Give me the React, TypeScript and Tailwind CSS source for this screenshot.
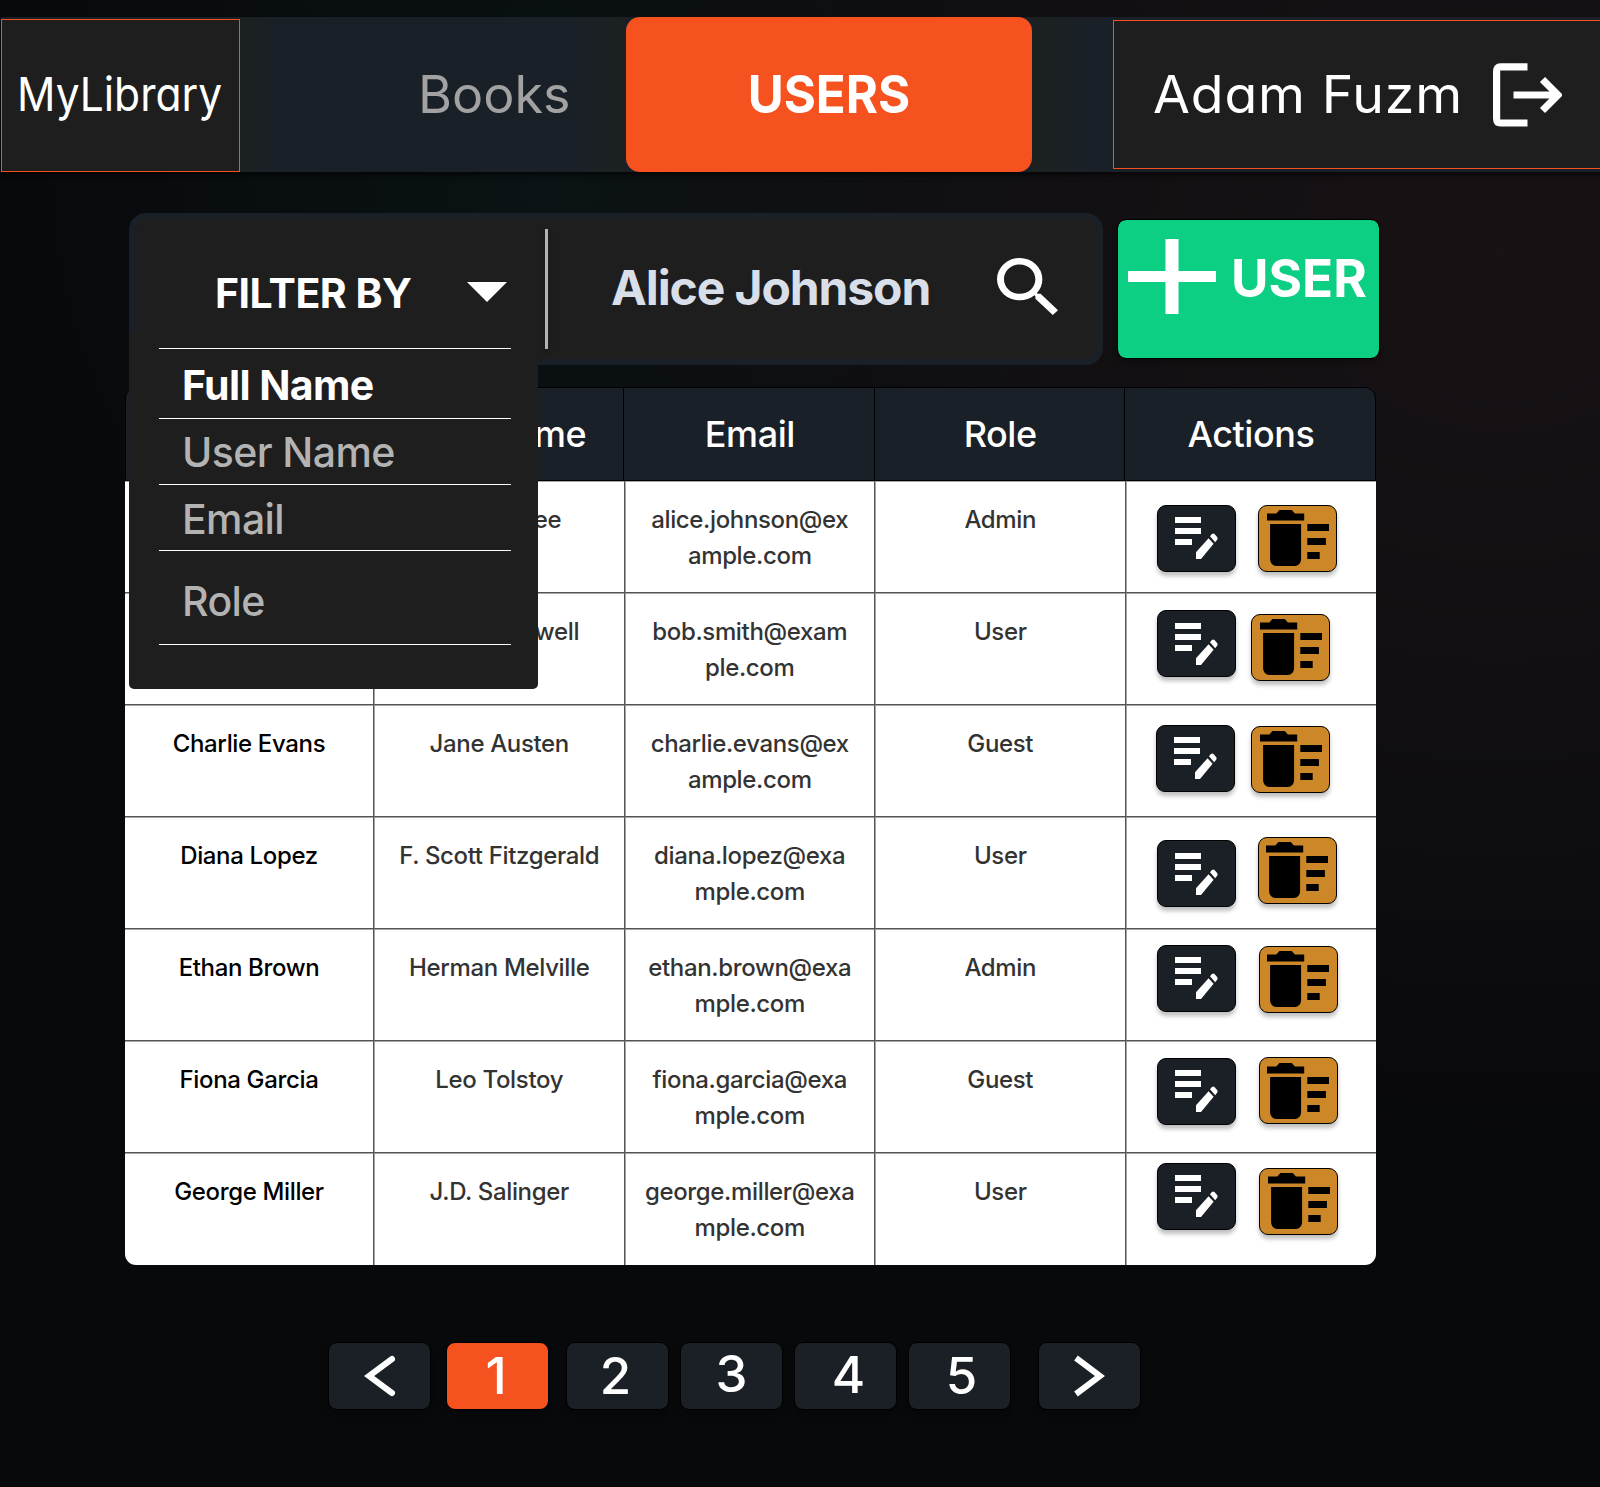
const users = [
  { name: "", user: "Harper Lee", email: ["alice.johnson@ex", "ample.com"], role: "Admin", edit: [31, 24], del: [22, 24], bin: [9, 5], note: 0 },
  { name: "", user: "George Orwell", email: ["bob.smith@exam", "ple.com"], role: "User", edit: [31, 17], del: [15, 21], bin: [9, 5], note: 1 },
  { name: "Charlie Evans", user: "Jane Austen", email: ["charlie.evans@ex", "ample.com"], role: "Guest", edit: [30, 20], del: [16, 21], bin: [9, 5], note: 0 },
  { name: "Diana Lopez", user: "F. Scott Fitzgerald", email: ["diana.lopez@exa", "mple.com"], role: "User", edit: [31, 23], del: [22, 20], bin: [8, 5], note: 1 },
  { name: "Ethan Brown", user: "Herman Melville", email: ["ethan.brown@exa", "mple.com"], role: "Admin", edit: [31, 16], del: [23, 17], bin: [8, 5], note: 0 },
  { name: "Fiona Garcia", user: "Leo Tolstoy", email: ["fiona.garcia@exa", "mple.com"], role: "Guest", edit: [31, 17], del: [23, 16], bin: [8, 6], note: 0 },
  { name: "George Miller", user: "J.D. Salinger", email: ["george.miller@exa", "mple.com"], role: "User", edit: [31, 10], del: [23, 15], bin: [9, 5], note: 0 },
];

const columns = ["", "Username", "Email", "Role", "Actions"];

function EditButton({ offset, note }: { offset: number[]; note: number }) {
  return (
    <button
      className="flex h-[67px] w-[79px] shrink-0 items-start rounded-[9px] border border-black bg-[#1a2025] shadow-[0_4px_4px_rgba(0,0,0,0.25)]"
      style={{ marginLeft: offset[0], marginTop: offset[1], paddingTop: note }}
      aria-label="Edit"
    >
      <svg viewBox="1 1 77 60" className="block h-[60px] w-[77px]" fill="#fff">
        <path d="M18 12h26v6H18zM18 23h26v6H18zM18 34h17v6H18z" />
        <path d="M39 54v-6.700L51.600 33.200 56.600 38.800 44 54z" />
        <path d="M53 31.200l1.900-2.200q1.300-1.200 2.600 0l2.600 2.900q1 1.200 .2 2.700l-2.100 2.600z" />
      </svg>
    </button>
  );
}

function DeleteButton({ offset, bin }: { offset: number[]; bin: number[] }) {
  return (
    <button
      className="flex h-[67px] w-[79px] shrink-0 items-start rounded-[9px] border border-black bg-[#cb8728] shadow-[0_4px_4px_rgba(0,0,0,0.25)]"
      style={{ marginLeft: offset[0], marginTop: offset[1], paddingLeft: bin[0] - 1, paddingTop: bin[1] - 1 }}
      aria-label="Delete"
    >
      <svg viewBox="2 4 20 16" preserveAspectRatio="none" className="block h-[56px] w-[62px]" fill="#000">
        <path d="M15 16h4v2h-4zm0-8h7v2h-7zm0 4h6v2h-6zM3 18c0 1.100.9 2 2 2h6c1.100 0 2-.9 2-2V8H3zM14 5h-3l-1-1H6L5 5H2v2h12z" />
      </svg>
    </button>
  );
}

function Header() {
  return (
    <header className="ml-px flex h-[155px] bg-[#1a2027] shadow-[0_4px_4px_rgba(0,0,0,0.5)]">
      <div className="mt-[2px] flex h-[153px] w-[239px] items-center border border-[#f4511e] bg-[#1e1e1e] pb-[3px] pl-[15px]">
        <span className="origin-left scale-x-[0.905] whitespace-nowrap text-[47px] font-normal text-white [font-feature-settings:'cv11']">MyLibrary</span>
      </div>
      <nav className="flex">
        <a className="flex w-[386px] items-center bg-[linear-gradient(90deg,#1c2020_0,#1a2027_36px,#1a2027_330px,#1c2020_380px)] pl-[178px] text-[52px] font-normal text-[#a3a2a2]">
          <span>Books</span>
        </a>
        <a className="flex h-[155px] w-[406px] items-center justify-center rounded-[14px] bg-[#f6521f] text-[52px] font-bold text-white">
          <span className="origin-center scale-x-[0.945]">USERS</span>
        </a>
      </nav>
      <div className="h-[155px] w-[81px] bg-[linear-gradient(90deg,#1c2020_0,#1a2027_50px)]" />
      <div className="mt-[3px] flex h-[149px] flex-1 items-center border border-r-0 border-[#f4511e] bg-[#1e1e1e] pl-[39px]">
        <span className="w-[308px] origin-left scale-x-[1.03] whitespace-nowrap text-[52px] font-normal tracking-[0.8px] text-white [font-feature-settings:'cv11']">Adam Fuzm</span>
        <svg viewBox="0 0 70 64" className="ml-[31px] h-[64px] w-[70px] shrink-0" fill="none" stroke="#fff" strokeWidth="7.2">
          <path d="M35.500 3.800H8.500Q4.600 3.800 4.600 8.200V55.600Q4.600 60 8.500 60H35.500" />
          <path d="M21.500 32H64M50.500 16.500L66 32L50.500 47.500" />
        </svg>
      </div>
    </header>
  );
}

function FilterItem({ label, className }: { label: string; className: string }) {
  return <div className={`border-b border-white pl-[23px] text-[41px] tracking-[-0.6px] ${className}`}>{label}</div>;
}

function SearchBar() {
  return (
    <div className="relative flex h-[152px] w-[974px] items-start rounded-[17px] border-[6px] border-[#1a2027] bg-[#1e1e1e]">
      <div className="flex w-[410px]">
        <span className="ml-[80px] mt-[49px] w-[199px] whitespace-nowrap text-[41px] font-bold leading-[50px] tracking-[-0.5px] text-white">FILTER BY</span>
        <svg viewBox="0 0 40 20" className="ml-[53px] mt-[63px] h-[20px] w-[40px]" fill="#fff">
          <path d="M0 0H40L20 20z" />
        </svg>
      </div>
      <div className="mt-[10px] h-[120px] w-[3px] bg-[#b3b3b3] shadow-[0_4px_4px_rgba(0,0,0,0.25)]" />
      <span className="ml-[63px] mt-[40px] w-[320px] whitespace-nowrap text-[48px] font-bold leading-[58px] tracking-[-1.1px] text-[#d9dfe8]">Alice Johnson</span>
      <svg viewBox="3 3 17.49 17.49" preserveAspectRatio="none" className="ml-[66px] mt-[39px] h-[57px] w-[61px]" fill="#fff">
        <path d="M15.500 14h-.79l-.28-.27A6.471 6.471 0 0 0 16 9.500 6.500 6.500 0 1 0 9.500 16c1.610 0 3.090-.59 4.230-1.570l.27.28v.79l5 4.990L20.490 19l-4.990-5zm-6 0C7.010 14 5 11.990 5 9.500S7.010 5 9.500 5 14 7.010 14 9.500 11.990 14 9.500 14z" />
      </svg>
      <div className="absolute -left-[6px] top-[112px] z-10 h-[358px] w-[409px] rounded-b-[5px] bg-[#1e1e1e] px-[30px] pr-[27px] pt-[17px] text-[#b3b3b3]">
        <div className="border-t border-white" />
        <FilterItem label="Full Name" className="h-[70px] font-bold leading-[73px] text-white" />
        <FilterItem label="User Name" className="h-[66px] font-medium leading-[67px]" />
        <FilterItem label="Email" className="h-[66px] font-medium leading-[68px]" />
        <FilterItem label="Role" className="h-[94px] font-medium leading-[101px]" />
      </div>
    </div>
  );
}

function AddUser() {
  return (
    <button className="ml-[14px] mt-[6px] flex h-[140px] w-[263px] items-start rounded-[9px] border border-black bg-[#0ccf83] bg-clip-padding shadow-[0_4px_4px_rgba(0,0,0,0.25)]">
      <svg viewBox="0 0 88 75" className="ml-[10px] mt-[19px] h-[75px] w-[88px] shrink-0" fill="#fff">
        <path d="M0 32H37.500V0H50.500V32H88V43H50.500V75H37.500V43H0z" />
      </svg>
      <span className="ml-[15px] mt-[27px] origin-left scale-x-[0.985] text-[52px] font-bold leading-[63px] text-white">USER</span>
    </button>
  );
}

function UserTable() {
  return (
    <div className="ml-[125px] mt-[22px] w-[1251px] overflow-hidden rounded-b-[11px] text-center">
      <div className="grid h-[94px] grid-cols-[248px_repeat(4,1fr)] divide-x divide-black rounded-t-[11px] border border-black bg-[#1a2027]">
        {columns.map((c) => (
          <div key={c} className="pl-[2px] text-[36px] font-medium leading-[93px] tracking-[-0.45px] text-white">{c}</div>
        ))}
      </div>
      {users.map((u) => (
        <div
          key={u.user}
          className="grid h-[112px] grid-cols-[249px_repeat(4,1fr)] divide-x divide-[#555] border-b border-[#555] bg-white text-[24px] font-medium leading-[36px] tracking-[-0.35px] text-[#333] last:border-b-0 [&>*]:shadow-[inset_0_1px_0_rgba(0,0,0,0.35)] [&>*+*]:shadow-[inset_1px_1px_0_rgba(0,0,0,0.35)]"
        >
          <div className="pt-[21px] text-black">{u.name}</div>
          <div className="pl-px pt-[21px]">{u.user}</div>
          <div className="pl-px pt-[21px]">
            {u.email[0]}
            <br />
            {u.email[1]}
          </div>
          <div className="pl-px pt-[21px]">{u.role}</div>
          <div className="flex items-start">
            <EditButton offset={u.edit} note={u.note} />
            <DeleteButton offset={u.del} bin={u.bin} />
          </div>
        </div>
      ))}
    </div>
  );
}

function PageButton({ children, className }: { children: React.ReactNode; className: string }) {
  return (
    <button className={`flex h-[68px] w-[103px] justify-center rounded-[9px] border border-black text-[51px] font-medium text-white shadow-[0_4px_4px_rgba(0,0,0,0.25)] ${className}`}>
      {children}
    </button>
  );
}

function Pagination() {
  return (
    <div className="ml-[328px] mt-[77px] flex">
      <PageButton className="bg-[#1a2025]">
        <svg viewBox="0 0 32 42" className="mt-[12px] h-[42px] w-[32px]" fill="none" stroke="#fff" strokeWidth="6" strokeLinecap="round">
          <path d="M28 4L5 21L28 38" />
        </svg>
      </PageButton>
      <PageButton className="ml-[15px] bg-[#f6521f] pr-[3px] leading-[66px]">1</PageButton>
      <PageButton className="ml-[17px] bg-[#1a2025] pr-[4px] leading-[66px]">2</PageButton>
      <PageButton className="ml-[11px] bg-[#1a2025] leading-[62px]">3</PageButton>
      <PageButton className="ml-[11px] bg-[#1a2025] pl-[6px] leading-[64px]">4</PageButton>
      <PageButton className="ml-[11px] bg-[#1a2025] pl-[4px] leading-[66px]">5</PageButton>
      <PageButton className="ml-[27px] bg-[#1a2025]">
        <svg viewBox="0 0 32 42" className="mt-[12px] h-[42px] w-[32px]" fill="none" stroke="#fff" strokeWidth="6">
          <path d="M2 3L26 21L2 39" />
        </svg>
      </PageButton>
    </div>
  );
}

export default function App() {
  return (
    <div className="h-[1487px] w-[1600px] overflow-hidden bg-[#08090b] bg-[radial-gradient(ellipse_1000px_900px_at_1500px_250px,#191215_0%,rgba(22,18,21,0.7)_45%,transparent_100%),radial-gradient(ellipse_560px_560px_at_560px_180px,#0a1315_0%,transparent_100%)] pt-[17px] font-['Inter',sans-serif]">
      <Header />
      <div className="ml-[129px] mt-[41px] flex">
        <SearchBar />
        <AddUser />
      </div>
      <UserTable />
      <Pagination />
    </div>
  );
}
